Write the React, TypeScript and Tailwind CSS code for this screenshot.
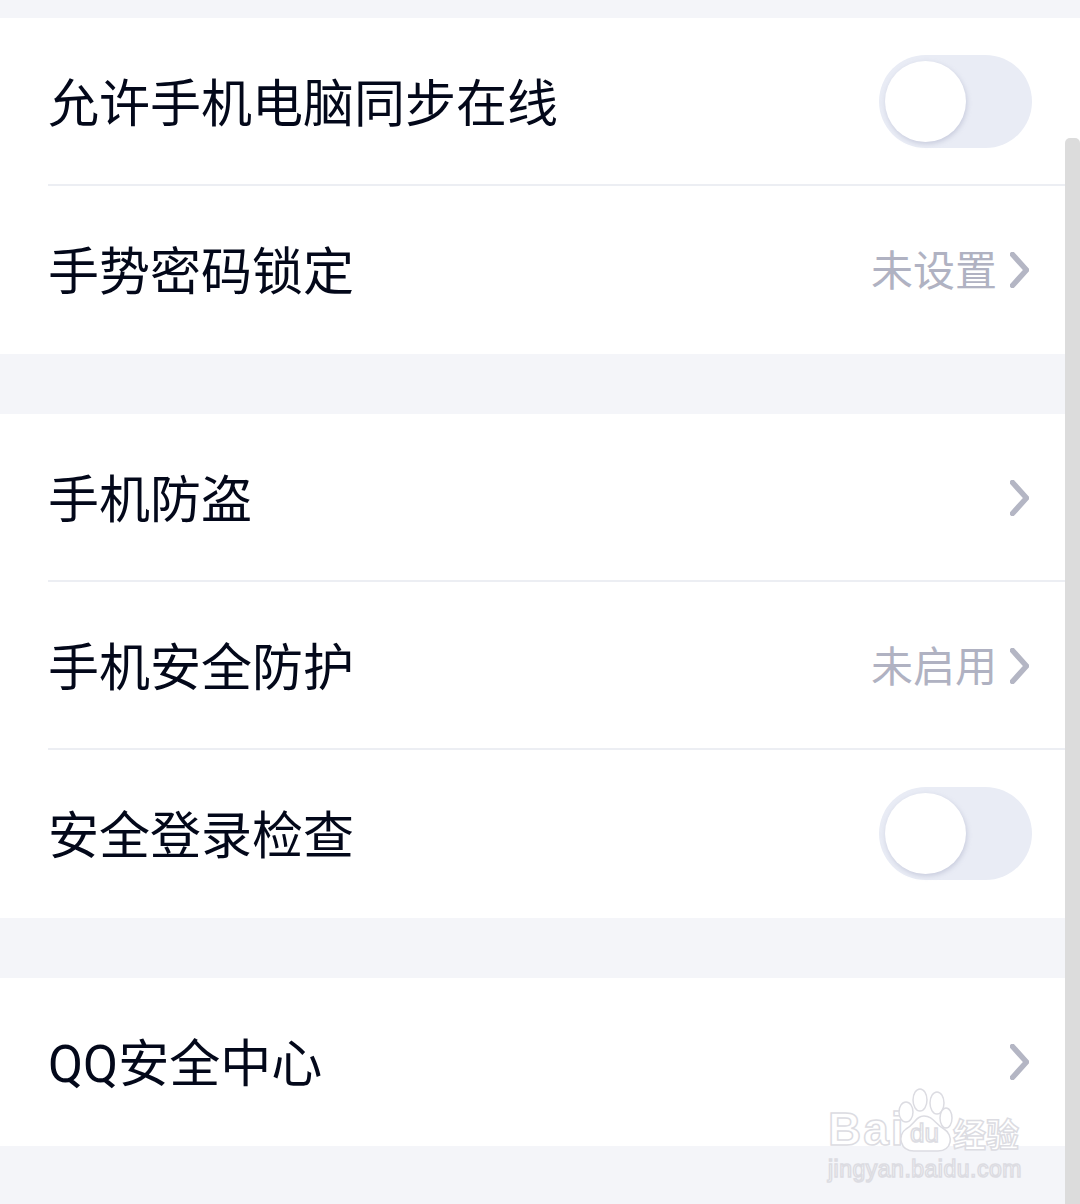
import { ReactNode } from "react";

function Switch() {
  return (
    <div className="w-[153px] h-[93px] rounded-full bg-[#e9ecf5] flex items-center pl-[6px]">
      <div className="w-[81px] h-[81px] rounded-full bg-white shadow-[1px_2px_5px_rgba(150,155,185,0.4)]" />
    </div>
  );
}

function Chevron() {
  return (
    <svg width="19" height="36" viewBox="0 0 19 36" fill="none" className="ml-[13px] mr-[3px] mt-[2px]">
      <path d="M2.5 2.5 L16.5 18 L2.5 33.5" stroke="#b4b6c4" strokeWidth="5.5" strokeLinecap="round" strokeLinejoin="round" />
    </svg>
  );
}

function Row({ label, hint, right, divider }: { label: string; hint?: string; right?: ReactNode; divider?: boolean }) {
  return (
    <div className={divider ? "ml-[48px] border-b-2 border-[#eceef3]" : "ml-[48px] border-b-2 border-transparent"}>
      <div className="h-[166px] flex items-center justify-between pr-[48px]">
        <span className="mt-[7px] text-[51px] leading-none text-[#03081a]">{label}</span>
        {right ?? (
          <div className="flex items-center">
            {hint && <span className="mt-[5px] text-[42px] leading-none text-[#b0b2c2]">{hint}</span>}
            <Chevron />
          </div>
        )}
      </div>
    </div>
  );
}

function Watermark() {
  const outline = "text-white [-webkit-text-stroke:1.5px_#dcdce2]";
  return (
    <div className="absolute left-[828px] top-[1088px] w-[200px] flex flex-col">
      <div className="flex items-end h-[64px]">
        <span className={`w-[68px] text-[46px] leading-none tracking-[2px] font-bold font-['Liberation_Sans'] ${outline}`}>Bai</span>
        <div className="relative w-[57px] h-[64px]">
          <svg width="57" height="64" viewBox="0 0 57 64" fill="#ffffff" stroke="#dcdce2" strokeWidth="1.5">
            <ellipse cx="10" cy="24" rx="7" ry="10" />
            <ellipse cx="24" cy="12" rx="7" ry="11" />
            <ellipse cx="41" cy="15" rx="7" ry="11" />
            <ellipse cx="50" cy="30" rx="6" ry="10" />
            <path d="M28 28 C20 28 19 36 10 41 C1 47 4 63 18 63 L42 63 C56 63 58 47 48 41 C39 36 37 28 28 28 Z" />
          </svg>
          <span className={`absolute inset-x-0 bottom-[6px] text-center text-[26px] leading-none font-['Liberation_Sans'] ${outline}`}>du</span>
        </div>
        <span className={`text-[33px] leading-none font-bold whitespace-nowrap ${outline}`}>经验</span>
      </div>
      <span className={`mt-[6px] text-[23px] leading-none tracking-[0.5px] whitespace-nowrap font-['Liberation_Sans'] ${outline}`}>jingyan.baidu.com</span>
    </div>
  );
}

export default function App() {
  return (
    <div className="relative w-[1080px] h-[1204px] overflow-hidden bg-[#f4f5f9] font-['Roboto','Noto_Sans_CJK_SC',sans-serif]">
      <div className="h-[18px]" />
      <div className="bg-white">
        <Row label="允许手机电脑同步在线" right={<Switch />} divider />
        <Row label="手势密码锁定" hint="未设置" />
      </div>
      <div className="h-[60px]" />
      <div className="bg-white">
        <Row label="手机防盗" divider />
        <Row label="手机安全防护" hint="未启用" divider />
        <Row label="安全登录检查" right={<Switch />} />
      </div>
      <div className="h-[60px]" />
      <div className="bg-white">
        <Row label="QQ安全中心" />
      </div>
      <Watermark />
      <div className="absolute right-0 top-[138px] bottom-0 w-[15px] bg-[#dcdcdc] rounded-t-[5px]" />
    </div>
  );
}
